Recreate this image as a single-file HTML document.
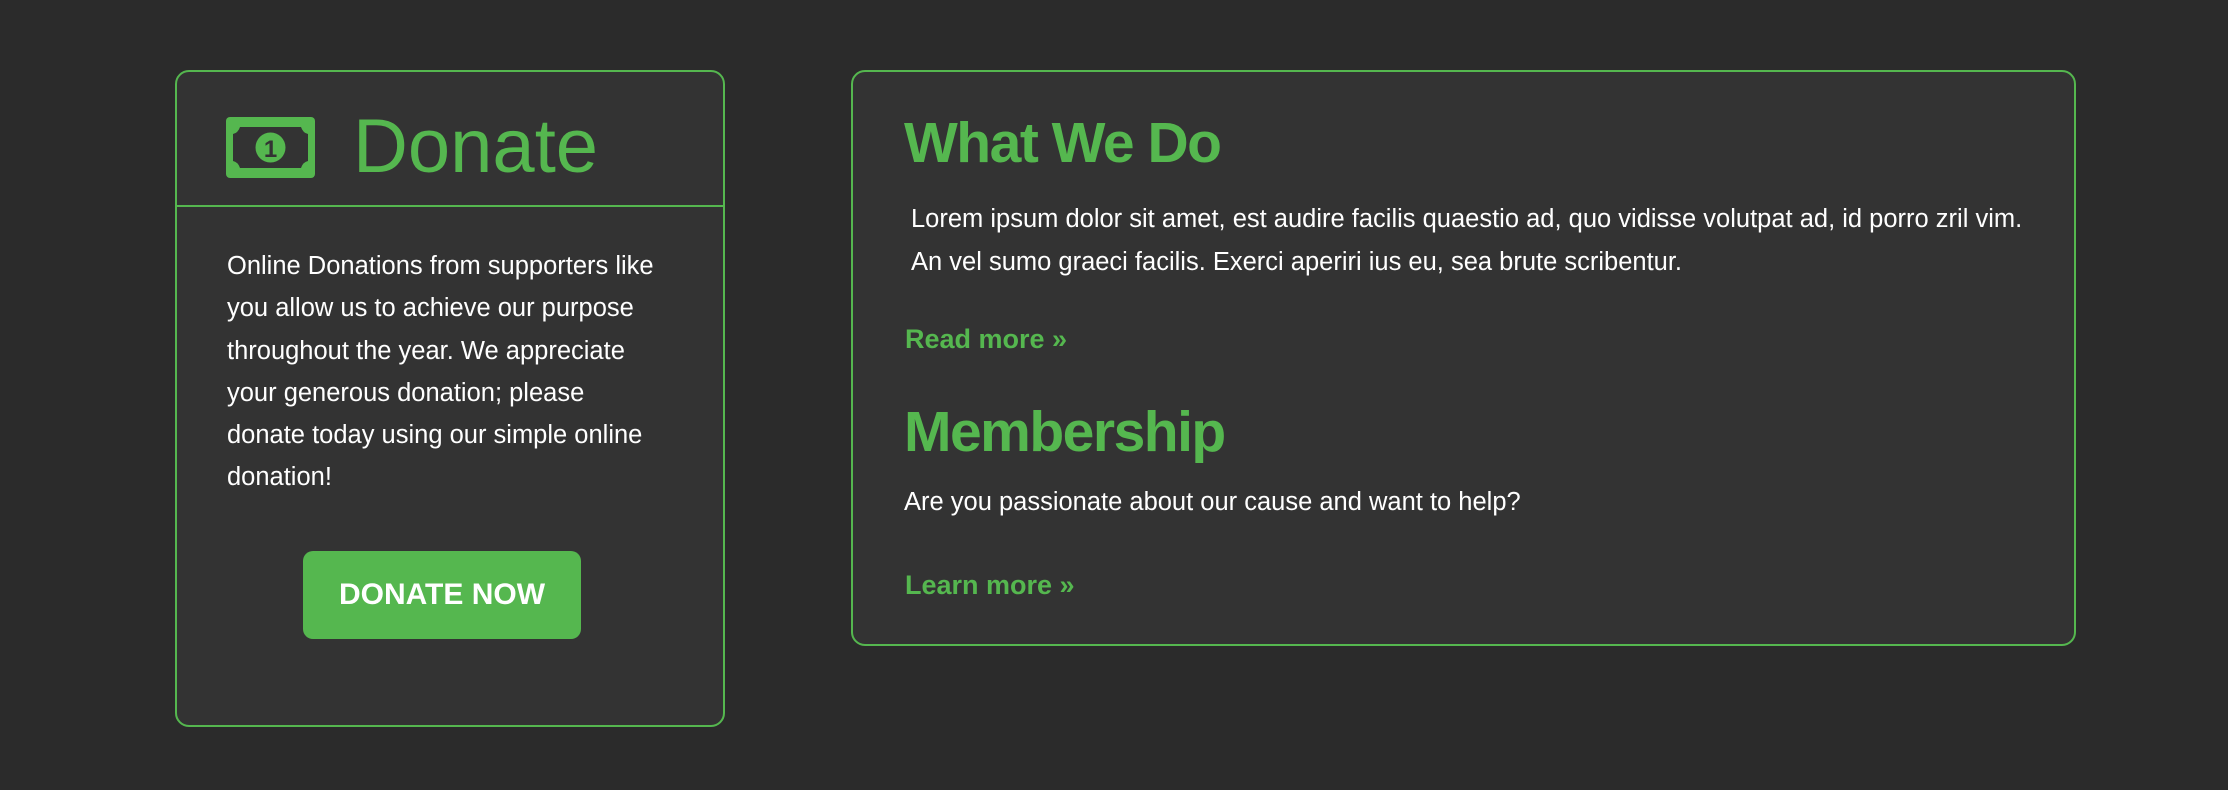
<!DOCTYPE html>
<html><head><meta charset="utf-8"><style>
*{margin:0;padding:0;box-sizing:border-box}
body{width:2228px;height:790px;background:#2b2b2b;font-family:"Liberation Sans",sans-serif;position:relative;overflow:hidden}
.box{position:absolute;background:#333;border:2px solid #55b74f;border-radius:14px}
.g{color:#55b74f}
.abs{position:absolute;white-space:nowrap}
</style></head><body>
<div class="box" style="left:175px;top:70px;width:550px;height:657px"></div>
<div class="abs" style="left:176px;top:205px;width:548px;height:2px;background:#55b74f"></div>
<svg class="abs" style="left:226px;top:117px" width="89" height="61" viewBox="0 0 89 61">
<rect x="0" y="0" width="89" height="61" rx="4" fill="#55b74f"/>
<path d="M14 10 H75 Q77 16 82 17 V44 Q77 45 75 51 H14 Q12 45 7 44 V17 Q12 16 14 10Z" fill="#333"/>
<circle cx="44.5" cy="30.5" r="15" fill="#55b74f"/>
<text x="44.5" y="40" text-anchor="middle" font-family="Liberation Sans" font-weight="bold" font-size="24" fill="#333">1</text>
</svg>
<div class="abs g" style="left:353px;top:102px;font-size:76px;line-height:90px">Donate</div>
<div class="abs" style="left:227px;top:245px;font-size:25.5px;line-height:42.3px;color:#fff">Online Donations from supporters like<br>you allow us to achieve our purpose<br>throughout the year. We appreciate<br>your generous donation; please<br>donate today using our simple online<br>donation!</div>
<div class="abs" style="left:303px;top:551px;width:278px;height:88px;background:#55b74f;border-radius:10px;color:#fff;font-weight:bold;font-size:30px;line-height:88px;text-align:center">DONATE NOW</div>

<div class="box" style="left:851px;top:70px;width:1225px;height:576px"></div>
<div class="abs g" style="left:904px;top:107px;font-size:57px;line-height:72px;font-weight:bold;letter-spacing:-1.5px">What We Do</div>
<div class="abs" style="left:911px;top:198px;font-size:25.5px;line-height:43px;color:#fff">Lorem ipsum dolor sit amet, est audire facilis quaestio ad, quo vidisse volutpat ad, id porro zril vim.<br>An vel sumo graeci facilis. Exerci aperiri ius eu, sea brute scribentur.</div>
<div class="abs g" style="left:905px;top:322px;font-size:27px;line-height:34px;font-weight:bold">Read more »</div>
<div class="abs g" style="left:904px;top:396px;font-size:57px;line-height:72px;font-weight:bold;letter-spacing:-1.5px">Membership</div>
<div class="abs" style="left:904px;top:486px;font-size:25.5px;line-height:32px;color:#fff">Are you passionate about our cause and want to help?</div>
<div class="abs g" style="left:905px;top:568px;font-size:27px;line-height:34px;font-weight:bold">Learn more »</div>
</body></html>
